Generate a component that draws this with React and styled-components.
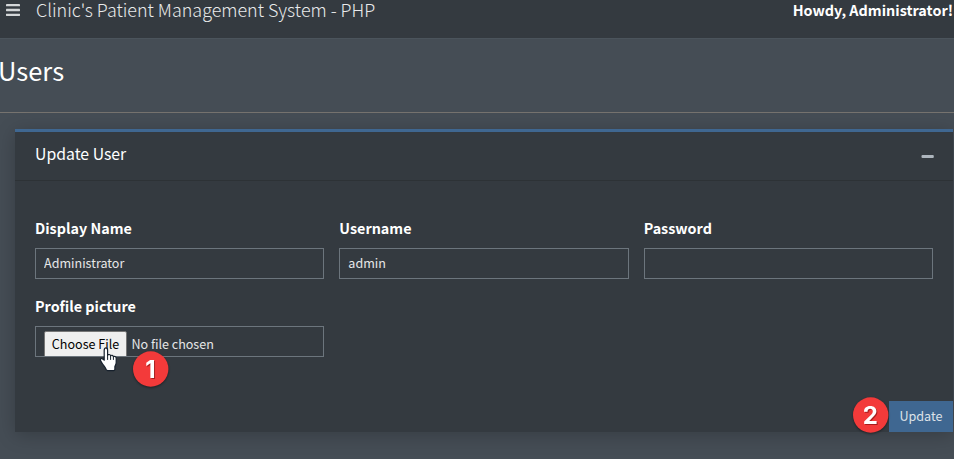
import React from "react";
import styled, { createGlobalStyle } from "styled-components";

const GlobalStyle = createGlobalStyle`
  *, *::before, *::after { box-sizing: border-box; }
  body {
    margin: 0;
    overflow: hidden;
    background: #454d55;
    color: #fff;
    font-family: "Noto Sans CJK SC", "Noto Sans", sans-serif;
    font-size: 14.4px;
    line-height: 24px;
  }
`;

const Page = styled.div`
  height: 459px;
  overflow: hidden;
`;

const Navbar = styled.header`
  display: flex;
  align-items: flex-start;
  height: 39px;
  padding: 0 1px 0 6px;
  background: #343a40;
  border-bottom: 1px solid #4b545c;
`;

const MenuButton = styled.button`
  display: flex;
  padding: 4px 0 0;
  margin-right: 16px;
  border: 0;
  background: none;
  color: #d3d6d8;
`;

const Brand = styled.span`
  font-size: 17.92px;
  font-weight: 300;
  line-height: 18px;
  color: #e9eaeb;
  white-space: nowrap;
`;

const Greeting = styled.strong`
  margin-left: auto;
  font-size: 14.4px;
  font-weight: 700;
  line-height: 20px;
  white-space: nowrap;
`;

const PageHeader = styled.div`
  height: 74px;
  padding-top: 13px;
  border-bottom: 1px solid #76736f;
`;

const PageTitle = styled.h1`
  margin: 0 0 0 -2px;
  font-size: 25.5px;
  font-weight: 400;
  line-height: 36px;
`;

const Card = styled.section`
  display: flex;
  flex-direction: column;
  height: 303px;
  margin: 16px 1px 0 15px;
  border-top: 3px solid #3f6791;
  background: #343a40;
  box-shadow: 0 3px 18px rgba(0, 0, 0, 0.22);
`;

const CardHeader = styled.div`
  display: flex;
  align-items: center;
  justify-content: space-between;
  height: 49px;
  padding: 0 19px 4px 20px;
  border-bottom: 1px solid #2d3236;
`;

const CardTitle = styled.h3`
  margin: 0;
  font-size: 15.8px;
  font-weight: 400;
  line-height: 24px;
`;

const Collapse = styled.button`
  display: flex;
  padding: 4px 0 0;
  border: 0;
  background: none;
  color: #adb5bd;
`;

const Fields = styled.div`
  display: grid;
  grid-template-columns: repeat(3, 1fr);
  gap: 16px 15px;
  padding: 35px 20px 0;
`;

const Field = styled.label`
  display: block;
  height: 62px;
`;

const Label = styled.span`
  display: block;
  height: 32px;
  font-size: 14.35px;
  font-weight: 700;
`;

const control = `
  width: 100%;
  height: 31px;
  border: 1px solid #6c757d;
  background: #343a40;
  color: #e6e7e8;
  font-family: inherit;
  font-size: 12.55px;
`;

const Input = styled.input`
  ${control}
  display: block;
  padding: 0 8px 2px;
  border-radius: 0;
  outline: none;
`;

const FilePicker = styled.div`
  ${control}
  display: flex;
  align-items: flex-start;
  gap: 4px;
  padding: 4px 8px 0;
  overflow: hidden;
  white-space: nowrap;
`;

const FileButton = styled.span`
  flex: none;
  width: 83px;
  height: 28px;
  border: 1px solid #767676;
  border-radius: 2px;
  background: #efefef;
  color: #000;
  line-height: 24px;
  text-align: center;
`;

const FileName = styled.span`
  padding-left: 0.4px;
  line-height: 26px;
`;

const Actions = styled.div`
  display: flex;
  justify-content: flex-end;
  margin-top: auto;
`;

const UpdateButton = styled.button`
  width: 64px;
  height: 31px;
  padding: 0 0 2px;
  border: 0;
  background: #3f6791;
  color: #dde2e8;
  font-family: inherit;
  font-size: 12.6px;
  line-height: 29px;
`;

const Marker = styled.svg`
  position: absolute;
  left: ${(p) => p.$x}px;
  top: ${(p) => p.$y}px;
  filter: drop-shadow(0 1px 1px rgba(0, 0, 0, 0.45));

  text {
    font: 700 24px Inter, sans-serif;
    text-anchor: middle;
    filter: drop-shadow(1px 1px 0 rgba(90, 0, 0, 0.5));
  }
`;

const Pointer = styled.svg`
  position: absolute;
  left: 99px;
  top: 346px;
`;

function StepMarker({ x, y, n }) {
  return (
    <Marker $x={x} $y={y} width="36" height="36" viewBox="0 0 36 36">
      <circle cx="17.7" cy="18" r="17.7" fill="#f33a3a" />
      <text x="17.4" y="26.5" fill="#fff">{n}</text>
    </Marker>
  );
}

export default function App() {
  return (
    <Page>
      <GlobalStyle />
      <Navbar>
        <MenuButton aria-label="Menu">
          <svg width="14" height="12" viewBox="0 0 14 12" fill="currentColor">
            <rect width="14" height="2.3" rx=".4" />
            <rect y="4.85" width="14" height="2.3" rx=".4" />
            <rect y="9.7" width="14" height="2.3" rx=".4" />
          </svg>
        </MenuButton>
        <Brand>Clinic's Patient Management System - PHP</Brand>
        <Greeting>Howdy, Administrator!</Greeting>
      </Navbar>
      <PageHeader>
        <PageTitle>Users</PageTitle>
      </PageHeader>
      <Card>
        <CardHeader>
          <CardTitle>Update User</CardTitle>
          <Collapse aria-label="Collapse">
            <svg width="13" height="3" viewBox="0 0 13 3">
              <rect x=".5" width="12.3" height="3" rx="1" fill="currentColor" />
            </svg>
          </Collapse>
        </CardHeader>
        <Fields>
          <Field>
            <Label>Display Name</Label>
            <Input defaultValue="Administrator" />
          </Field>
          <Field>
            <Label>Username</Label>
            <Input defaultValue="admin" />
          </Field>
          <Field>
            <Label>Password</Label>
            <Input type="password" />
          </Field>
          <Field as="div">
            <Label>Profile picture</Label>
            <FilePicker>
              <FileButton>Choose File</FileButton>
              <FileName>No file chosen</FileName>
            </FilePicker>
          </Field>
        </Fields>
        <Actions>
          <UpdateButton>Update</UpdateButton>
        </Actions>
      </Card>
      <StepMarker x={133} y={351} n="1" />
      <StepMarker x={852.5} y={397} n="2" />
      <Pointer width="20" height="26" viewBox="0 0 20 26">
        <path
          d="M5.200 4.200c0-3 3.400-3 3.400 0v5.200c.4-1.300 2.800-1.200 3 .4.7-1 2.700-.6 2.800.9 1-.8 2.800-.1 2.800 1.600v4.200c0 1.500-.8 2.700-1.300 4v2.800c0 .8-.5 1.300-1.300 1.300H8.700c-.8 0-1.200-.4-1.500-1.100-.9-2.300-2.700-4-4.100-6.300-.8-1.300-1.900-2.600-1.700-3.700.3-1.500 2.200-1.300 3.800.7z"
          fill="#fff"
          stroke="#16202c"
          strokeWidth="1.2"
          strokeLinejoin="round"
        />
        <path d="M8.600 9v4.500M11.600 10v3.500M14.400 11v2.500" fill="none" stroke="#16202c" strokeLinecap="round" />
      </Pointer>
    </Page>
  );
}
